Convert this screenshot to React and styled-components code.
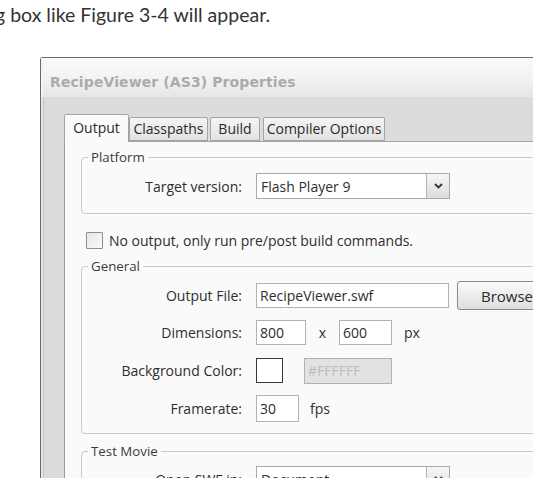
import React from "react";
import styled, { createGlobalStyle } from "styled-components";

const Global = createGlobalStyle`
  html, body { margin: 0; padding: 0; background: #ffffff; overflow: hidden; }
  body { width: 533px; height: 478px; }
`;

const Page = styled.div`
  width: 533px;
  height: 478px;
  overflow: hidden;
`;

const Caption = styled.p`
  margin: 0;
  padding-top: 4px;
  height: 57px;
  box-sizing: border-box;
  font-family: Lato, "Open Sans", sans-serif;
  font-size: 19.5px;
  line-height: 22px;
  color: #333;
  white-space: nowrap;
  text-indent: -5px;
`;

const Window = styled.div`
  margin-left: 40px;
  width: 580px;
  border-top: 1px solid #6a6a6a;
  border-left: 1px solid #6a6a6a;
  border-top-left-radius: 3px;
  background: #dcdcdc;
  font-family: "Open Sans", "DejaVu Sans", sans-serif;
  font-size: 14px;
  color: #2e2e2e;
`;

const TitleBar = styled.div`
  box-sizing: border-box;
  height: 39px;
  padding: 9px 0 0 7px;
  line-height: 30px;
  background: linear-gradient(#fbfbfb, #f1f1f1 60%, #e6e6e6);
  border-left: 2px solid #f4f4f4;
  font-family: "DejaVu Sans", sans-serif;
  font-weight: bold;
  font-size: 14px;
  color: #ababab;
  letter-spacing: 0.1px;
  white-space: nowrap;
`;

const Body = styled.div`
  border-left: 2px solid #e6e6e6;
  box-shadow: inset 1px 0 0 #c4c4c4;
  padding: 17px 0 0 21px;
`;

const TabStrip = styled.div`
  display: flex;
  align-items: flex-end;
  height: 27px;
  position: relative;
  z-index: 1;
`;

const Tab = styled.div`
  box-sizing: border-box;
  width: ${(p) => p.$w}px;
  margin-left: ${(p) => p.$gap || 0}px;
  height: ${(p) => (p.$active ? "28px" : "24px")};
  margin-bottom: ${(p) => (p.$active ? "-1px" : "0")};
  display: flex;
  justify-content: center;
  align-items: ${(p) => (p.$active ? "flex-start" : "center")};
  padding-top: ${(p) => (p.$active ? "4px" : "0")};
  border: 1px solid #a4a4a4;
  border-bottom: ${(p) => (p.$active ? "none" : "1px solid #a4a4a4")};
  border-radius: 2px 2px 0 0;
  background: ${(p) =>
    p.$active ? "#fafafa" : "linear-gradient(#f4f4f4, #e2e2e2)"};
  color: #2a2a2a;
  line-height: 18px;
  white-space: nowrap;
`;

const Panel = styled.div`
  background: #fafafa;
  border-top: 1px solid #a4a4a4;
  border-left: 1px solid #9c9c9c;
  padding: 6px 0 40px 16px;
  display: flex;
  flex-direction: column;
`;

const Group = styled.fieldset`
  margin: 0;
  padding: ${(p) => p.$pad || "8px 0 13px 0"};
  border: 1px solid #c9c9c9;
  border-radius: 4px;
  display: flex;
  flex-direction: column;
  min-width: 0;
`;

const Legend = styled.legend`
  margin-left: 6px;
  padding: 0 3px;
  font-size: 13.3px;
  line-height: 18px;
  color: #3a3a3a;
`;

const Row = styled.div`
  display: grid;
  grid-template-columns: 160px auto;
  column-gap: 14px;
  align-items: center;
  height: ${(p) => p.$h || "37px"};
`;

const Label = styled.span`
  text-align: right;
  color: #2e2e2e;
  white-space: nowrap;
`;

const Controls = styled.div`
  display: flex;
  align-items: center;
  gap: ${(p) => p.$gap || "10px"};
`;

const Select = styled.div`
  box-sizing: border-box;
  width: 194px;
  height: 26px;
  border: 1px solid #a9a9a9;
  background: #fff;
  display: flex;
  align-items: stretch;
`;

const SelectText = styled.span`
  flex: 1;
  padding-left: 4px;
  display: flex;
  align-items: center;
  white-space: nowrap;
`;

const ArrowBtn = styled.span`
  width: 22px;
  border-left: 1px solid #b4b4b4;
  background: linear-gradient(#f6f6f6, #dcdcdc);
  display: flex;
  align-items: center;
  justify-content: center;
`;

const Input = styled.div`
  box-sizing: border-box;
  width: ${(p) => p.$w}px;
  height: ${(p) => p.$h || 25}px;
  border: 1px solid #b2b2b2;
  background: ${(p) => (p.$disabled ? "#e2e2e2" : "#fff")};
  color: ${(p) => (p.$disabled ? "#bdbdbd" : "#2e2e2e")};
  padding-left: 3px;
  display: flex;
  align-items: center;
  white-space: nowrap;
`;

const Swatch = styled.div`
  box-sizing: border-box;
  width: 27px;
  height: 25px;
  border: 1px solid #3a3a3a;
  background: #fff;
`;

const Button = styled.div`
  box-sizing: border-box;
  width: 92px;
  height: 29px;
  border: 1px solid #8a8a8a;
  border-radius: 3px;
  background: linear-gradient(#fbfbfb, #ececec 50%, #dedede);
  display: flex;
  align-items: center;
  padding-left: 23px;
  color: #2a2a2a;
  font-size: 15px;
  white-space: nowrap;
`;

const Unit = styled.span`
  color: #2e2e2e;
  width: ${(p) => (p.$w ? `${p.$w}px` : "auto")};
  margin-left: ${(p) => p.$ml || 0}px;
  text-align: center;
`;

const CheckRow = styled.label`
  display: flex;
  align-items: center;
  gap: 6px;
  margin: 18px 0 8px 5px;
  height: 17px;
  white-space: nowrap;
`;

const CheckBox = styled.span`
  box-sizing: border-box;
  width: 17px;
  height: 17px;
  border: 1px solid #8e8e8e;
  border-radius: 1px;
  background: linear-gradient(135deg, #e6e6e6, #fafafa);
`;

const Spacer = styled.div`
  height: ${(p) => p.$h}px;
`;

const Chevron = () => (
  <svg width="9" height="6" viewBox="0 0 9 6">
    <path d="M1 1 L4.5 4.5 L8 1" fill="none" stroke="#333" strokeWidth="1.8" />
  </svg>
);

export default function App() {
  return (
    <Page>
      <Global />
      <Caption>g box like Figure 3-4 will appear.</Caption>
      <Window>
        <TitleBar>RecipeViewer (AS3) Properties</TitleBar>
        <Body>
          <TabStrip>
            <Tab $active $w={65}>Output</Tab>
            <Tab $w={79}>Classpaths</Tab>
            <Tab $w={50} $gap={2}>Build</Tab>
            <Tab $w={122} $gap={3}>Compiler Options</Tab>
          </TabStrip>
          <Panel>
            <Group $pad="6px 0 13px 0">
              <Legend>Platform</Legend>
              <Row $h="28px">
                <Label>Target version:</Label>
                <Select>
                  <SelectText>Flash Player 9</SelectText>
                  <ArrowBtn>
                    <Chevron />
                  </ArrowBtn>
                </Select>
              </Row>
            </Group>
            <CheckRow>
              <CheckBox />
              No output, only run pre/post build commands.
            </CheckRow>
            <Group $pad="2px 0 6px 0">
              <Legend>General</Legend>
              <Row>
                <Label>Output File:</Label>
                <Controls $gap="8px">
                  <Input $w={193}>RecipeViewer.swf</Input>
                  <Button>Browse...</Button>
                </Controls>
              </Row>
              <Row>
                <Label>Dimensions:</Label>
                <Controls $gap="0px">
                  <Input $w={50}>800</Input>
                  <Unit $w={33}>x</Unit>
                  <Input $w={53}>600</Input>
                  <Unit $ml={12}>px</Unit>
                </Controls>
              </Row>
              <Row $h="39px">
                <Label>Background Color:</Label>
                <Controls $gap="21px">
                  <Swatch />
                  <Input $w={88} $h={26} $disabled>
                    #FFFFFF
                  </Input>
                </Controls>
              </Row>
              <Row>
                <Label>Framerate:</Label>
                <Controls $gap="11px">
                  <Input $w={43} $h={27}>30</Input>
                  <Unit>fps</Unit>
                </Controls>
              </Row>
            </Group>
            <Spacer $h={8} />
            <Group $pad="4px 0 8px 0">
              <Legend>Test Movie</Legend>
              <Row $h="30px">
                <Label>Open SWF in:</Label>
                <Select>
                  <SelectText>Document</SelectText>
                  <ArrowBtn>
                    <Chevron />
                  </ArrowBtn>
                </Select>
              </Row>
            </Group>
          </Panel>
        </Body>
      </Window>
    </Page>
  );
}
